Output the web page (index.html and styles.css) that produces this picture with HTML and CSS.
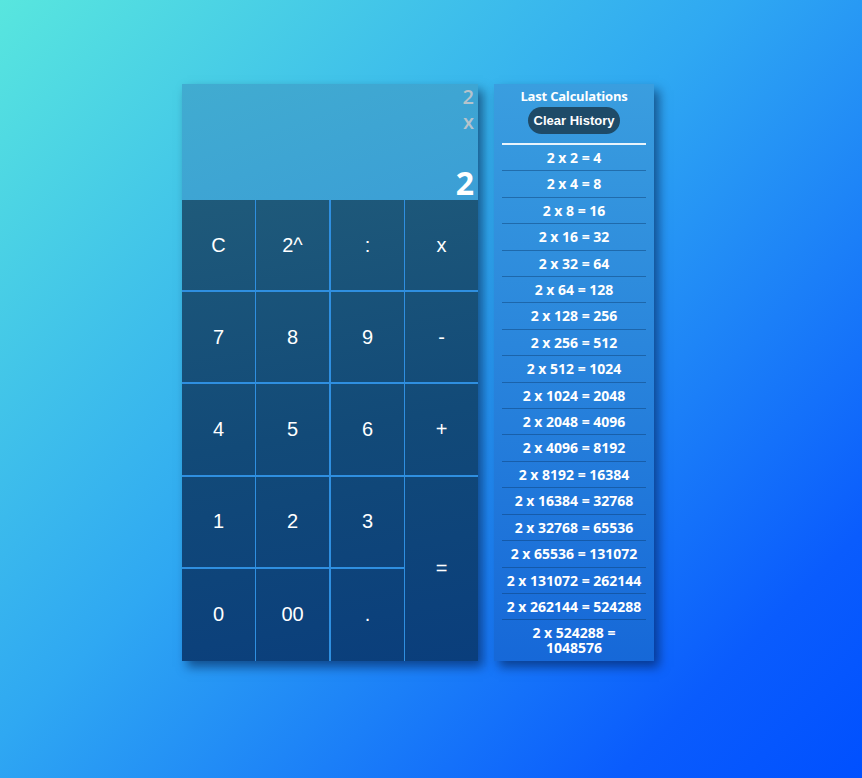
FILE: index.html
```html
<!DOCTYPE html>
<html lang="en">
<head>
<meta charset="utf-8">
<title>Calculator</title>
<link rel="stylesheet" href="styles.css">
</head>
<body>
<main class="app">
  <section class="calc">
    <div class="display">
      <div class="prev">2</div>
      <div class="prev">x</div>
      <div class="current">2</div>
    </div>
    <div class="keys">
      <button class="key">C</button>
      <button class="key">2^</button>
      <button class="key">:</button>
      <button class="key last-col">x</button>
      <button class="key">7</button>
      <button class="key">8</button>
      <button class="key">9</button>
      <button class="key last-col">-</button>
      <button class="key">4</button>
      <button class="key">5</button>
      <button class="key">6</button>
      <button class="key last-col">+</button>
      <button class="key">1</button>
      <button class="key">2</button>
      <button class="key">3</button>
      <button class="key last-col equals">=</button>
      <button class="key last-row">0</button>
      <button class="key last-row">00</button>
      <button class="key last-row">.</button>
    </div>
  </section>
  <aside class="history">
    <h2 class="history-title">Last Calculations</h2>
    <button class="clear">Clear History</button>
    <ul class="history-list">
      <li>2 x 2 = 4</li>
      <li>2 x 4 = 8</li>
      <li>2 x 8 = 16</li>
      <li>2 x 16 = 32</li>
      <li>2 x 32 = 64</li>
      <li>2 x 64 = 128</li>
      <li>2 x 128 = 256</li>
      <li>2 x 256 = 512</li>
      <li>2 x 512 = 1024</li>
      <li>2 x 1024 = 2048</li>
      <li>2 x 2048 = 4096</li>
      <li>2 x 4096 = 8192</li>
      <li>2 x 8192 = 16384</li>
      <li>2 x 16384 = 32768</li>
      <li>2 x 32768 = 65536</li>
      <li>2 x 65536 = 131072</li>
      <li>2 x 131072 = 262144</li>
      <li>2 x 262144 = 524288</li>
      <li class="wrap">2 x 524288 = 1048576</li>
    </ul>
  </aside>
</main>
</body>
</html>
```

FILE: styles.css
```css
* { box-sizing: border-box; }

html, body {
  margin: 0;
  height: 100%;
}

body {
  background: linear-gradient(135deg, #58e6de 0%, #2fa8f2 45%, #0a5cfd 85%, #0050ff 100%);
  font-family: "Open Sans", "Noto Sans", sans-serif;
  color: #fff;
}

.app {
  display: flex;
  align-items: flex-start;
  gap: 16px;
  padding: 84px 0 0 182px;
}

.calc {
  width: 296px;
  box-shadow: 5px 6px 10px rgba(0, 20, 60, 0.55);
  display: flex;
  flex-direction: column;
}

.display {
  height: 116px;
  background: linear-gradient(160deg, #41acd0 0%, #3b9ed6 100%);
  padding: 0 4px 0 0;
  text-align: right;
  display: flex;
  flex-direction: column;
  align-items: flex-end;
}

.prev {
  font-size: 20px;
  font-weight: 600;
  color: #b5c3cc;
  line-height: 25px;
}

.current {
  margin-top: auto;
  font-size: 32px;
  font-weight: 700;
  line-height: 34px;
}

.keys {
  height: 461px;
  display: grid;
  grid-template-columns: 74px 75px 74px 73px;
  grid-template-rows: repeat(5, 1fr);
  background: linear-gradient(170deg, #1f5a7a 0%, #124a78 50%, #0a3e7c 100%);
}

.key {
  background: transparent;
  border: 0;
  border-right: 1px solid #2f8fe0;
  border-bottom: 2px solid #2f8fe0;
  color: #fff;
  font-family: "Liberation Sans", Arial, sans-serif;
  font-size: 20px;
  padding: 0;
  margin: 0;
}

.key:nth-child(4n+2) { border-right-width: 2px; }

.key.last-col { border-right: 0; }
.key.last-row { border-bottom: 0; }

.equals {
  grid-column: 4;
  grid-row: 4 / span 2;
  border-bottom: 0;
}

.history {
  width: 160px;
  min-height: 577px;
  background: linear-gradient(180deg, #3a9edf 0%, #2a86dc 45%, #1668d8 100%);
  box-shadow: 5px 6px 10px rgba(0, 20, 60, 0.55);
  padding: 4px 8px 4px;
  display: flex;
  flex-direction: column;
  align-items: center;
  font-weight: 700;
}

.history-title {
  margin: 0;
  font-size: 13px;
  font-weight: 700;
  line-height: 17px;
  letter-spacing: -0.2px;
}

.clear {
  margin-top: 2px;
  height: 27px;
  padding: 0;
  width: 92px;
  white-space: nowrap;
  border: 0;
  border-radius: 14px;
  background: #1e4b68;
  color: #fff;
  font-family: "Liberation Sans", Arial, sans-serif;
  font-size: 13px;
  font-weight: 700;
}

.history-list {
  list-style: none;
  margin: 9px 0 0;
  padding: 0;
  width: 100%;
  border-top: 2px solid #e8f4fc;
}

.history-list li {
  text-align: center;
  font-size: 14px;
  line-height: 15.4px;
  padding: 5px 0;
  border-bottom: 1px solid rgba(10, 60, 110, 0.45);
  white-space: nowrap;
}

.history-list li.wrap {
  border-bottom: 0;
  padding: 5px 10px 0;
  line-height: 15px;
  white-space: normal;
}
```
